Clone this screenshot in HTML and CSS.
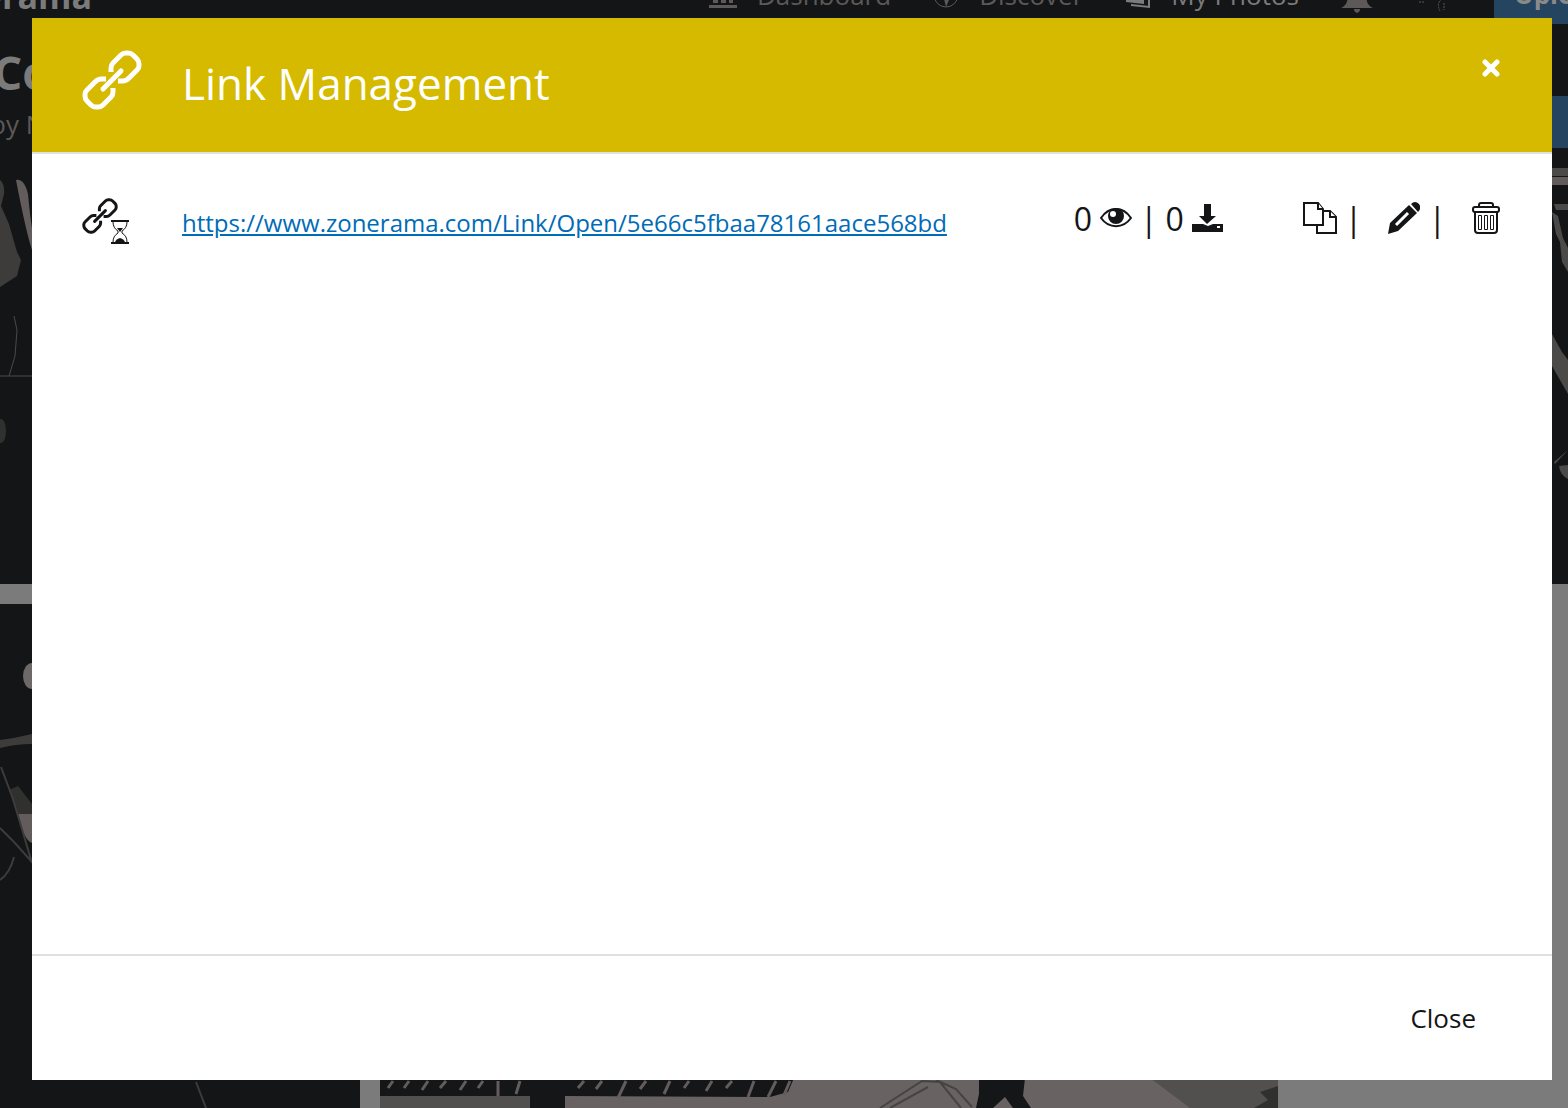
FILE: index.html
```html
<!DOCTYPE html>
<html lang="en">
<head>
    <meta charset="UTF-8">
    <meta name="viewport" content="width=device-width, initial-scale=1.0">
    <title>Link Management</title>
    <link rel="stylesheet" href="styles.css">
</head>
<body>
    <svg class="sprite" aria-hidden="true">
        <symbol id="icon-link" viewBox="0 0 60 60">
            <g fill="none" stroke="currentColor" stroke-width="5">
                <path d="M29 22V18Q29 15 31 13L39 5Q41 3 44 3H46Q49 3 51 5L55 9Q57 11 57 14V16Q57 18 55 20L47 28Q44 31 41 31H36"/>
                <path d="M31 38V42Q31 45 29 47L21 55Q19 57 16 57H14Q11 57 9 55L5 51Q3 49 3 46V44Q3 42 5 40L13 32Q16 29 19 29H24"/>
                <path d="M21 39L39 21" stroke-linecap="round"/>
            </g>
        </symbol>
    </svg>

    <div class="page" aria-hidden="true">
        <header class="topbar">
            <div class="logo">Zonerama</div>
            <nav class="topnav">
                <span class="nav-item">
                    <svg width="28" height="30" viewBox="0 0 28 30"><path d="M0 25h28v3H0zM4 10h5v13H4zM12 4h5v19h-5zM20 13h4v10h-4z" fill="currentColor"/></svg>
                    Dashboard
                </span>
                <span class="nav-item">
                    <svg width="26" height="28" viewBox="0 0 26 28"><circle cx="13" cy="14" r="12" fill="none" stroke="currentColor"/><path d="M10 4l7 6-3 6 2 3-3 7-2-8-5-5z" fill="currentColor"/></svg>
                    Discover
                </span>
                <span class="nav-item active">
                    <svg width="26" height="28" viewBox="0 0 26 28"><path d="M1 4h18v19L1 21z" fill="currentColor"/><path d="M22 8h2v18L6 24" fill="none" stroke="currentColor" stroke-width="2"/></svg>
                    My Photos
                </span>
                <svg class="bell" width="32" height="36" viewBox="0 0 32 36"><path d="M0 31c8-4 6-9 7-17 1-6 4-9 9-9s8 3 9 9c1 8-1 13 7 17zM13 32h6c0 5-6 5-6 0z" fill="currentColor"/></svg>
                <svg class="avatar" width="34" height="40" viewBox="0 0 34 40"><path d="M4 27h5M27 24q-6 4-2 12M29 28v7" fill="none" stroke="currentColor" stroke-dasharray="2 1"/></svg>
            </nav>
            <div class="upload">Upload</div>
        </header>
        <div class="album-head">
            <div>
                <div class="album-title">Concert</div>
                <div class="album-author">by Nela</div>
            </div>
            <div class="share"></div>
        </div>
        <div class="gallery">
            <div class="photo photo-wide">
                <svg class="edge" width="32" height="416" viewBox="0 0 32 416">
                    <path d="M0 12q5 4 4 14l-3 12 8 18 8 28 4 8-4 16-17 11z" fill="#3d3c3a"/>
                    <path d="M16 12q8-2 12 14 2 22 4 34v22q-6-18-16-70z" fill="#625d5c"/>
                    <path d="M14 148l3 14-2 26-6 20M0 208h32" fill="none" stroke="#4b4a48"/>
                    <ellipse cx="1" cy="263" rx="5" ry="12" fill="#30302f"/>
                </svg>
                <svg class="edge" width="16" height="416" viewBox="0 0 16 416">
                    <path d="M0 0h16v8H0z" fill="#4b4a48"/>
                    <path d="M0 9h16v8H0z" fill="#625d5c"/>
                    <path d="M2 36h14v6H4zM0 44l6 4 5 22 5 10v24l-6-10-2-20-4-8z" fill="#4b4a48"/>
                    <path d="M0 166l10 18 6 8v34L0 198zM2 294l14-12-13 14zM7 298l9-1v14q-8-4-9-13z" fill="#4b4a48"/>
                </svg>
            </div>
            <div class="row">
                <div class="photo photo-left">
                    <svg class="edge" width="360" height="504" viewBox="0 0 360 504">
                        <ellipse cx="32" cy="72" rx="9" ry="13" fill="#6d6968"/>
                        <path d="M0 136q16-2 32-6v10q-16 0-32 4z" fill="#3d3c3a"/>
                        <path d="M9 186l9-4 14 18v34l-8-2z" fill="#30302f"/>
                        <path d="M18 210h14v29q-8-2-14-29z" fill="#625d5c"/>
                        <path d="M1 163l12 32 19 64M0 224l14 14 18 20M14 253q-4 16-14 23M196 478l10 26" fill="none" stroke="#3d3c3a" stroke-width="2"/>
                    </svg>
                </div>
                <div class="photo photo-snow">
                    <svg width="898" height="504" viewBox="0 0 898 504">
                        <path d="M0 0h898v504H0z" fill="#686362"/>
                        <path d="M0 474h150v30H0zM770 474h128v30H810z" fill="#51504e"/>
                        <path d="M0 474h414l-6 14-18 5-206-1H0z" fill="#151617"/>
                        <path d="M8 484L13 477M24 484L29 477M42 486L48 477M60 484L66 477M80 486L86 477M98 484L103 477M118 492V477M136 490L140 477M198 484L204 477M216 485L222 477M238 494L246 477M260 485L266 477M284 490L290 477M304 484L309 477M326 487L332 477M346 484L352 477M368 493L374 477M388 493L396 477M404 491L410 477" stroke="#625d5c" stroke-width="3"/>
                        <path d="M150 474h35v30h-35zM599 474h46l-2 18 8 12h-18l-8-11-12 11h-17l3-14z" fill="#151617"/>
                        <path d="M500 504l42-27 18 1 21 26M510 504l38-21M556 476l20 9 16 18" fill="none" stroke="#454442" stroke-width="2"/>
                        <path d="M898 482l-18 6 8 8-14 8h24z" fill="#30302f"/>
                    </svg>
                </div>
            </div>
        </div>
    </div>

    <div class="modal" role="dialog" aria-labelledby="modal-title">
        <div class="modal-header">
            <svg class="header-icon" width="60" height="60"><use href="#icon-link"/></svg>
            <h1 id="modal-title">Link Management</h1>
            <button class="close-x" type="button" aria-label="Close dialog">
                <svg width="20" height="20" viewBox="0 0 20 20"><path d="M3 4l12 12M15 4L3 16" stroke="currentColor" stroke-width="5" stroke-linecap="round"/></svg>
            </button>
        </div>

        <div class="modal-body">
            <div class="link-row">
                <div class="link-type">
                    <svg width="36" height="36"><use href="#icon-link"/></svg>
                    <svg class="hourglass" width="18" height="24" viewBox="0 0 18 24">
                        <path d="M0 1h18M0 23h18" stroke="currentColor" stroke-width="2"/>
                        <path d="M2 2q0 6 5 9v2q-5 3-5 9M16 2q0 6-5 9v2q5 3 5 9" fill="none" stroke="currentColor"/>
                        <path d="M6 8h6l-3 4zM4 22q1-3 5-4 4 1 5 4z" fill="currentColor"/>
                    </svg>
                </div>
                <a class="link-url" href="https://www.zonerama.com/Link/Open/5e66c5fbaa78161aace568bd">https://www.zonerama.com/Link/Open/5e66c5fbaa78161aace568bd</a>
                <div class="stats">
                    <span>0</span>
                    <svg width="32" height="22" viewBox="0 0 32 22">
                        <path d="M1 11C9-1 23-1 31 11 23 22 9 22 1 11z" fill="none" stroke="currentColor" stroke-width="2"/>
                        <circle cx="16" cy="9" r="8" fill="currentColor"/>
                        <circle cx="13" cy="7" r="3" fill="#fff"/>
                    </svg>
                    <span>|</span>
                    <span>0</span>
                    <svg width="31" height="30" viewBox="0 0 31 30"><path d="M12 1h7v12h5l-9 8-8-8h5zM0 21h11l5 2 5-2h10v8H0z" fill="currentColor"/><path d="M25 23h3v2h-3z" fill="#fff"/></svg>
                </div>
                <div class="actions">
                    <button type="button" aria-label="Copy link">
                        <svg width="34" height="32" viewBox="0 0 34 32">
                            <g fill="#fff" stroke="currentColor" stroke-width="2">
                                <path d="M14 9h13l6 6v16H14z"/>
                                <path d="M27 9v6h6"/>
                                <path d="M1 1h14l5 6v16H1z"/>
                                <path d="M15 1v6h5"/>
                            </g>
                        </svg>
                    </button>
                    <span>|</span>
                    <button type="button" aria-label="Edit link">
                        <svg width="32" height="32" viewBox="0 0 32 32">
                            <path d="M0 32l2-11L21 3l8 8-19 18zM23 2q4-4 8 0 3 4-1 8z" fill="currentColor"/>
                            <path d="M8 23L20 11" stroke="#fff" stroke-width="3"/>
                        </svg>
                    </button>
                    <span>|</span>
                    <button type="button" aria-label="Delete link">
                        <svg width="28" height="32" viewBox="0 0 28 32">
                            <g fill="none" stroke="currentColor" stroke-width="2">
                                <path d="M7 5V3q0-2 2-2h10q2 0 2 2v2"/>
                                <rect x="1" y="5" width="26" height="5" rx="2"/>
                                <path d="M3 10v18q0 3 3 3h16q3 0 3-3V10"/>
                            </g>
                            <path d="M6.500 13.500h3v14h-3zM12.500 13.500h3v14h-3zM18.500 13.500h3v14h-3z" fill="none" stroke="currentColor"/>
                        </svg>
                    </button>
                </div>
            </div>
        </div>

        <div class="modal-footer">
            <button class="btn-close" type="button">Close</button>
        </div>
    </div>
</body>
</html>
```
FILE: styles.css
```css
* {
    box-sizing: border-box;
}
body {
    margin: 0;
    font-family: "Open Sans", sans-serif;
    font-size: 26px;
    color: #141517;
}
svg {
    display: block;
    flex: none;
}
.sprite {
    position: absolute;
    width: 0;
    height: 0;
}
button {
    font: inherit;
    color: inherit;
    background: none;
    border: none;
    padding: 0;
    cursor: pointer;
}

/* page under the dialog */
.page {
    height: 100vh;
    overflow: hidden;
    background: #141517;
    color: #5c5958;
}
.topbar {
    display: flex;
    align-items: center;
    height: 60px;
    margin-top: -36px;
}
.logo {
    display: flex;
    justify-content: flex-end;
    width: 92px;
    padding-top: 4px;
    font-size: 34px;
    font-weight: 700;
    color: #7b7b7b;
}
.topnav {
    display: flex;
    align-items: center;
    gap: 42px;
    margin-left: auto;
    padding-top: 2px;
}
.nav-item {
    display: flex;
    align-items: center;
    gap: 20px;
}
.nav-item.active {
    color: #7b7b7b;
}
.upload {
    width: 74px;
    margin-left: 45px;
    padding-left: 20px;
    overflow: hidden;
    line-height: 60px;
    font-weight: 700;
    color: #8a8a8a;
    background: #24445f;
}
.album-head {
    display: flex;
    justify-content: space-between;
    height: 144px;
    padding-top: 16px;
}
.album-title {
    margin-left: -7px;
    line-height: 64px;
    font-size: 46px;
    font-weight: 700;
    color: #7b7b7b;
}
.album-author {
    margin-left: -10px;
    line-height: 40px;
}
.share {
    width: 60px;
    height: 52px;
    margin: 56px -44px 0 0;
    background: #24445f;
}
.gallery {
    background: #7b7b7b;
}
.photo {
    background: #141517;
}
.photo-wide {
    display: flex;
    justify-content: space-between;
    height: 416px;
    margin-bottom: 20px;
}
.row {
    display: flex;
    gap: 20px;
}

/* dialog */
.modal {
    position: fixed;
    inset: 18px 16px 28px 32px;
    display: flex;
    flex-direction: column;
    background: #fff;
}
.modal-header {
    display: flex;
    align-items: center;
    height: 136px;
    padding: 0 50px 10px;
    color: #fff;
    background: #d5ba00;
    border-bottom: 2px solid #e0e0e0;
}
.modal-header h1 {
    margin: 0 auto 0 40px;
    padding-top: 6px;
    font-size: 44px;
    font-weight: 400;
}
.close-x {
    align-self: flex-start;
    margin-top: 40px;
}
.modal-body {
    flex: 1;
    padding: 44px 52px 0 50px;
}
.link-row {
    display: flex;
    align-items: flex-start;
}
.link-type {
    position: relative;
    width: 100px;
    height: 48px;
}
.hourglass {
    position: absolute;
    left: 29px;
    top: 22px;
}
.link-url {
    margin-right: auto;
    font-size: 24px;
    line-height: 50px;
    color: #006cb7;
}
.stats,
.actions {
    display: flex;
    align-items: center;
    gap: 8px;
    height: 40px;
    font-size: 32px;
}
.actions {
    margin-left: 80px;
}
.actions span + button {
    margin-left: 18px;
}
.modal-footer {
    display: flex;
    align-items: center;
    justify-content: flex-end;
    height: 126px;
    padding: 0 76px;
    border-top: 2px solid #e0e0e0;
}
```
